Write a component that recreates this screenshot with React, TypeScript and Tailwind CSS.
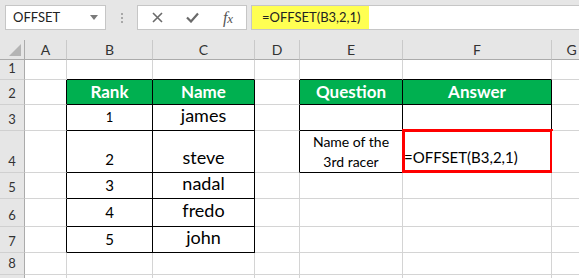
const FONT = "font-['Lato','Liberation_Sans',sans-serif]";

const COLS = ['A', 'B', 'C', 'D', 'E', 'F', 'G'];
const ROW_H = [20, 25, 26, 42, 26, 28, 26, 22, 22];

type Cell = { text: string; cls?: string };

const DATA: Record<string, Cell> = {
    B2: { text: 'Rank', cls: 'text-[17px] font-bold text-white justify-center items-center' },
    C2: { text: 'Name', cls: 'text-[17px] font-bold text-white justify-center items-center' },
    E2: { text: 'Question', cls: 'text-[17px] font-bold text-white justify-center items-center' },
    F2: { text: 'Answer', cls: 'text-[17px] font-bold text-white justify-center items-center' },
    B3: { text: '1', cls: 'text-[13px] justify-center items-center' },
    C3: { text: 'james', cls: 'text-[18px] justify-center items-end pb-[1px]' },
    B4: { text: '2', cls: 'text-[15px] justify-center items-end pb-[2px]' },
    C4: { text: 'steve', cls: 'text-[18px] justify-center items-end pb-[1px]' },
    B5: { text: '3', cls: 'text-[15px] justify-center items-end pb-[2px]' },
    C5: { text: 'nadal', cls: 'text-[18px] justify-center items-end pb-[1px]' },
    B6: { text: '4', cls: 'text-[15px] justify-center items-end pb-[3px]' },
    C6: { text: 'fredo', cls: 'text-[18px] justify-center items-end pb-[2px]' },
    B7: { text: '5', cls: 'text-[15px] justify-center items-end pb-[2px]' },
    C7: { text: 'john', cls: 'text-[18px] justify-center items-end pb-[1px]' },
    F4: { text: '=OFFSET(B3,2,1)', cls: 'text-[15px] justify-start items-end pb-[4px] pl-[1px]' },
};

function inTable(r: number, c: number) {
    const col = COLS[c];
    if (r >= 2 && r <= 7 && (col === 'B' || col === 'C')) return true;
    if (r >= 2 && r <= 4 && (col === 'E' || col === 'F')) return true;
    return false;
}

function Toolbar() {
    return (
        <div className="flex h-[40px] items-start bg-[#e6e6e6] pt-[5px] pl-[5px]">
            <div className="flex h-[25px] w-[101px] items-center justify-between border border-[#c6c6c6] bg-white pl-[7px] pr-[7px] text-[13px] text-[#222]">
                <span>OFFSET</span>
                <svg width="8" height="5" viewBox="0 0 8 5">
                    <path d="M0 0 L8 0 L4 5 Z" fill="#7a7a7a" />
                </svg>
            </div>
            <div className="flex h-[25px] w-[31px] flex-col items-center justify-center gap-[2px]">
                <span className="h-[2px] w-[2px] bg-[#a8a8a8]" />
                <span className="h-[2px] w-[2px] bg-[#a8a8a8]" />
                <span className="h-[2px] w-[2px] bg-[#a8a8a8]" />
            </div>
            <div className="flex h-[25px] w-[110px] items-center border border-[#c6c6c6] bg-white">
                <div className="flex w-[36px] justify-center pl-[2px]">
                    <svg width="11" height="11" viewBox="0 0 11 11">
                        <path d="M1 1 L10 10 M10 1 L1 10" stroke="#6a6a6a" strokeWidth="1.6" />
                    </svg>
                </div>
                <div className="flex w-[36px] justify-center">
                    <svg width="13" height="11" viewBox="0 0 13 11">
                        <path d="M1 5.5 L5 9.5 L12 1.5" stroke="#6a6a6a" strokeWidth="2.2" fill="none" />
                    </svg>
                </div>
                <div className="flex w-[36px] items-baseline justify-center font-['Liberation_Serif',serif] text-[16px] leading-none italic text-[#555]">
                    f<span className="text-[13px]">x</span>
                </div>
            </div>
            <div className="ml-[4px] flex h-[25px] flex-1 items-center border-y border-l border-[#c6c6c6] bg-white">
                <div className="flex h-full w-[117px] items-center bg-[#ffff52] pl-[10px] text-[13px] text-[#222]">
                    =OFFSET(B3,2,1)
                </div>
            </div>
        </div>
    );
}

function Sheet() {
    return (
        <div className="grid grid-cols-[25px_42px_86px_102px_45px_103px_149px_40px] grid-rows-[20px_20px_25px_26px_42px_26px_28px_26px_22px_22px]">
            <div className="relative border-r border-b border-[#ababab] bg-[#e6e6e6]">
                <svg className="absolute right-[3px] bottom-[3px]" width="12" height="12" viewBox="0 0 12 12">
                    <path d="M12 0 L12 12 L0 12 Z" fill="#b4b4b4" />
                </svg>
            </div>
            {COLS.map((c) => (
                <div
                    key={c}
                    className="flex items-center justify-center border-r border-b border-r-[#c9c9c9] border-b-[#ababab] bg-[#e6e6e6] text-[14px] text-[#333]"
                >
                    {c}
                </div>
            ))}
            {ROW_H.map((_, ri) => {
                const r = ri + 1;
                return [
                    <div
                        key={`h${r}`}
                        className="flex items-end justify-center border-r border-b border-r-[#ababab] border-b-[#d0d0d0] bg-[#e6e6e6] pb-[1px] text-[13px] text-[#333]"
                    >
                        {r < 9 ? r : ''}
                    </div>,
                    ...COLS.map((c, ci) => {
                        const t = inTable(r, ci);
                        const rb = t || inTable(r, ci + 1);
                        const bb = t || inTable(r + 1, ci);
                        const cell = DATA[`${c}${r}`];
                        const green = t && r === 2;
                        return (
                            <div
                                key={`${c}${r}`}
                                className={`relative flex border-r border-b text-black ${rb ? 'border-r-black' : 'border-r-[#d4d4d4]'} ${bb ? 'border-b-black' : 'border-b-[#d4d4d4]'} ${green ? 'bg-[#00b050]' : 'bg-white'} ${cell?.cls ?? ''}`}
                            >
                                {cell?.text}
                                {c === 'E' && r === 4 && (
                                    <div className="flex w-full flex-col items-center justify-center text-[14px] leading-[20px]">
                                        <span>Name of the</span>
                                        <span>3rd racer</span>
                                    </div>
                                )}
                                {c === 'F' && r === 4 && (
                                    <div className="absolute -top-[2px] -left-px -right-[2px] -bottom-px border-[3px] border-[#ff0000]" />
                                )}
                            </div>
                        );
                    }),
                ];
            })}
        </div>
    );
}

export default function App() {
    return (
        <div className={`h-[278px] w-[579px] overflow-hidden bg-white ${FONT}`}>
            <Toolbar />
            <Sheet />
        </div>
    );
}
